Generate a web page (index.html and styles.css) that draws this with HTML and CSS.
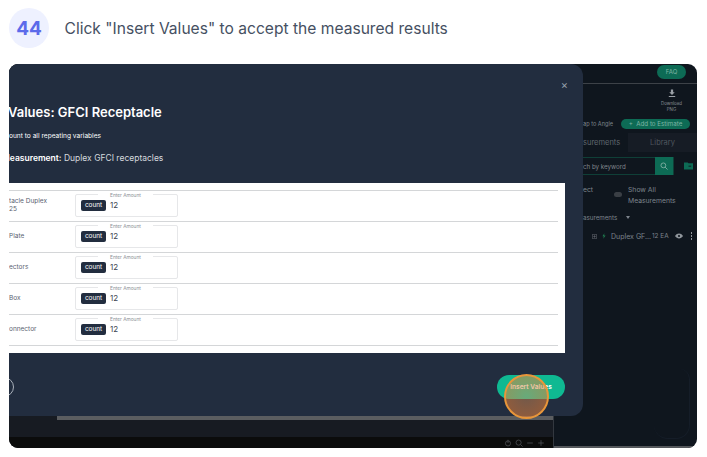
FILE: index.html
```html
<!DOCTYPE html>
<html lang="en">
<head>
    <meta charset="UTF-8">
    <title>Step 44</title>
    <link rel="stylesheet" href="styles.css">
</head>
<body>

<!-- Step heading -->
<div class="step-head">
    <div class="step-num">44</div>
    <div class="step-text">Click "Insert Values" to accept the measured results</div>
</div>

<!-- Screenshot of the app -->
<div class="shot">

    <div class="canvas-col">
        <div class="canvas-area"></div>
        <div class="scroll-row"><div class="scroll-thumb"></div></div>
        <div class="canvas-foot"></div>
        <div class="zoom-bar">
            <svg class="zoom-icon" viewBox="0 0 10 10"><circle cx="5" cy="5.5" r="3.2"/><path d="M5 1v4"/></svg>
            <svg class="zoom-icon" viewBox="0 0 10 10"><circle cx="4.5" cy="4.5" r="3.2"/><path d="M7 7l2.5 2.5"/></svg>
            <svg class="zoom-icon" viewBox="0 0 10 10"><path d="M1.5 5h7"/></svg>
            <svg class="zoom-icon" viewBox="0 0 10 10"><path d="M1.5 5h7M5 1.5v7"/></svg>
        </div>
    </div>

    <div class="side">
        <div class="side-top"><span class="faq">FAQ</span></div>
        <div class="download">
            <svg class="download-icon" viewBox="0 0 10 10"><path d="M3.6 0h2.8v3.4h2L5 6.8 1.6 3.4h2zM1 8.2h8v1.3H1z"/></svg>
            <div>Download<br>PNG</div>
        </div>
        <div class="snap-row">
            <span>ap to Angle</span>
            <span class="add-pill">+&nbsp; Add to Estimate</span>
        </div>
        <div class="tabs">
            <div class="tab-on">surements</div>
            <div class="tab-off">Library</div>
        </div>
        <div class="search-row">
            <div class="search-box">
                <span class="search-text">ch by keyword</span>
                <span class="search-btn">
                    <svg viewBox="0 0 10 10"><circle cx="4.2" cy="4.2" r="3"/><path d="M6.4 6.4l3 3"/></svg>
                </span>
            </div>
            <svg class="folder" viewBox="0 0 10 8"><path d="M0 0h4l1 1h5v7H0z"/><path class="folder-mark" d="M5 4.2h3"/></svg>
        </div>
        <div class="select-row">
            <span>ect</span>
            <span class="toggle"></span>
            <span class="show-all">Show All<br>Measurements</span>
        </div>
        <div class="list-head">asurements<span class="caret"></span></div>
        <div class="item-row">
            <svg class="item-box" viewBox="0 0 8 8"><path d="M.5.5h7v7h-7zM4 2v4M2 4h4"/></svg>
            <svg class="item-bolt" viewBox="0 0 6 8"><path d="M3.6 0L.6 4.5h2L2 8l3.4-4.8H3.2z"/></svg>
            <span class="item-name">Duplex GF...</span>
            <span>12 EA</span>
            <svg class="item-eye" viewBox="0 0 12 8"><path d="M0 4c3-5 9-5 12 0-3 5-9 5-12 0z"/><circle class="eye-dot" cx="6" cy="4" r="1.6"/></svg>
            <span class="kebab"><i></i><i></i><i></i></span>
        </div>
        <div class="side-ghost"></div>
    </div>

    <!-- Modal over the app -->
    <div class="modal">
        <div class="modal-close">&times;</div>
        <div class="modal-title">Values: GFCI Receptacle</div>
        <div class="modal-sub">ount to all repeating variables</div>
        <div class="modal-meas"><b>Measurement:</b> Duplex GFCI receptacles</div>

        <div class="panel">
            <div class="var-row var-first">
                <div class="var-name">tacle Duplex<br>25</div>
                <div class="amount">
                    <span class="amount-label">Enter Amount</span>
                    <span class="unit">count</span>
                    <span class="amount-val">12</span>
                </div>
            </div>
            <div class="var-row">
                <div class="var-name">Plate</div>
                <div class="amount">
                    <span class="amount-label">Enter Amount</span>
                    <span class="unit">count</span>
                    <span class="amount-val">12</span>
                </div>
            </div>
            <div class="var-row">
                <div class="var-name">ectors</div>
                <div class="amount">
                    <span class="amount-label">Enter Amount</span>
                    <span class="unit">count</span>
                    <span class="amount-val">12</span>
                </div>
            </div>
            <div class="var-row">
                <div class="var-name">Box</div>
                <div class="amount">
                    <span class="amount-label">Enter Amount</span>
                    <span class="unit">count</span>
                    <span class="amount-val">12</span>
                </div>
            </div>
            <div class="var-row">
                <div class="var-name">onnector</div>
                <div class="amount">
                    <span class="amount-label">Enter Amount</span>
                    <span class="unit">count</span>
                    <span class="amount-val">12</span>
                </div>
            </div>
        </div>

        <div class="modal-foot">
            <span class="back-btn"></span>
            <span class="insert-btn">Insert Values</span>
        </div>
    </div>

    <!-- Click marker -->
    <div class="click-mark"></div>
</div>

</body>
</html>
```

FILE: styles.css
```css
* {
    box-sizing: border-box;
}

body {
    margin: 0;
    padding: 8px 10px 0 9px;
    background: #ffffff;
    font-family: Inter, "Liberation Sans", sans-serif;
}

/* Step heading */
.step-head {
    display: flex;
    align-items: center;
    gap: 15.5px;
    height: 40px;
}

.step-num {
    width: 40px;
    height: 40px;
    border-radius: 50%;
    background: #eef1ff;
    color: #5c6bea;
    font-size: 19px;
    font-weight: 700;
    display: flex;
    align-items: center;
    justify-content: center;
}

.step-text {
    font-size: 15.6px;
    color: #465062;
}

/* Screenshot */
.shot {
    position: relative;
    display: flex;
    width: 688px;
    height: 384px;
    margin-top: 16px;
    overflow: hidden;
    border-radius: 9px;
    background: #0f161e;
}

.canvas-col {
    display: flex;
    flex-direction: column;
    width: 545px;
    border-right: 1px solid #33383f;
}

.canvas-area {
    height: 352px;
    background: #171b22;
}

.scroll-row {
    height: 4px;
    padding-left: 48px;
    background: #171b22;
}

.scroll-thumb {
    height: 4px;
    background: #5b5d60;
}

.canvas-foot {
    height: 17px;
    background: #171b22;
}

.zoom-bar {
    flex: 1;
    display: flex;
    justify-content: flex-end;
    align-items: center;
    gap: 3px;
    padding-right: 8px;
    background: #0b0c0c;
}

.zoom-icon {
    width: 8px;
    height: 8px;
    fill: none;
    stroke: #4c4f53;
    stroke-width: 1;
}

/* Right side of the app */
.side {
    position: relative;
    flex: 1;
    padding-left: 29px;
    color: #7d848c;
    font-size: 6.5px;
    border-bottom: 2px solid #55585c;
}

.side-top {
    display: flex;
    justify-content: flex-end;
    height: 20px;
    padding: 1px 11px 0 0;
    border-bottom: 1px solid #3d4248;
}

.faq {
    width: 29px;
    height: 14px;
    border-radius: 7px;
    background: #0d6b55;
    color: #7fb5a6;
    font-size: 6px;
    line-height: 14px;
    text-align: center;
}

.download {
    margin-top: 5px;
    padding-left: 63px;
    width: 114px;
    text-align: center;
    font-size: 4.4px;
    line-height: 5.5px;
    color: #8a9097;
    height: 30px;
}

.download-icon {
    display: block;
    width: 8px;
    height: 9px;
    margin: 0 auto 3px;
    fill: #9aa0a6;
}

.snap-row {
    display: flex;
    align-items: center;
    justify-content: space-between;
    height: 10px;
    padding-right: 7px;
    font-size: 5.6px;
}

.add-pill {
    width: 69px;
    height: 10px;
    border-radius: 5px;
    background: #0d6b55;
    color: #7fb5a6;
    font-size: 6.2px;
    line-height: 10px;
    text-align: center;
}

.tabs {
    display: flex;
    height: 19px;
    margin-top: 4px;
    font-size: 7.5px;
    line-height: 19px;
}

.tab-on {
    width: 45px;
    color: #5f666e;
}

.tab-off {
    flex: 1;
    background: #161c25;
    color: #4f565e;
    text-align: center;
}

.search-row {
    display: flex;
    align-items: center;
    gap: 10px;
    margin-top: 5px;
}

.search-box {
    display: flex;
    justify-content: space-between;
    align-items: center;
    width: 91px;
    height: 18px;
    border: 1px solid #0f3f37;
    border-left: 0;
    color: #80868d;
    font-size: 6.2px;
}

.search-btn {
    display: flex;
    align-items: center;
    justify-content: center;
    width: 18px;
    height: 18px;
    background: #0d6b55;
}

.search-btn svg {
    width: 8px;
    height: 8px;
    fill: none;
    stroke: #8fb8ad;
    stroke-width: 1;
}

.folder {
    width: 9px;
    height: 8px;
    fill: #0d6b55;
}

.folder-mark {
    fill: none;
    stroke: #0f161e;
    stroke-width: 1;
}

.select-row {
    display: flex;
    margin-top: 9px;
    height: 24px;
    line-height: 11px;
    font-size: 6.8px;
}

.select-row > span:first-child {
    width: 32px;
}

.toggle {
    width: 8px;
    height: 5px;
    margin: 8px 6px 0 -1px;
    border-radius: 3px;
    background: #3a3f45;
}

.list-head {
    margin-top: 5px;
    font-size: 6.2px;
    line-height: 9px;
}

.caret {
    display: inline-block;
    margin-left: 9px;
    border: 2px solid transparent;
    border-top: 3px solid #7d848c;
    border-bottom: 0;
    vertical-align: 1px;
}

.item-row {
    display: flex;
    align-items: center;
    height: 10px;
    margin-top: 9px;
    padding-left: 9px;
    font-size: 6.4px;
}

.item-box {
    width: 5px;
    height: 5px;
    fill: none;
    stroke: #666c73;
    stroke-width: 1;
}

.item-bolt {
    width: 4px;
    height: 6px;
    margin: 0 5px 0 5px;
    fill: #1f7a4f;
}

.item-name {
    width: 41px;
    font-size: 7px;
    white-space: nowrap;
}

.item-eye {
    width: 8px;
    height: 6px;
    margin-left: 6px;
    fill: #8f959b;
}

.eye-dot {
    fill: #0f161e;
}

.kebab {
    display: flex;
    flex-direction: column;
    gap: 1.5px;
    margin-left: 8px;
}

.kebab i {
    display: block;
    width: 1.5px;
    height: 1.5px;
    background: #8f959b;
}

.side-ghost {
    position: absolute;
    right: 7px;
    bottom: 7px;
    width: 36px;
    height: 70px;
    border: 1px solid #151d28;
    border-top: 0;
    border-left: 0;
    border-radius: 0 10px 14px 14px;
}

/* Modal */
.modal {
    position: absolute;
    left: 0;
    top: 0;
    width: 574px;
    height: 352px;
    padding-top: 40px;
    overflow: hidden;
    border-radius: 0 12px 12px 0;
    background: #222d3f;
    color: #ffffff;
}

.modal-close {
    position: absolute;
    right: 15px;
    top: 14px;
    color: #97a0ab;
    font-size: 11px;
    line-height: 15px;
}

.modal-title {
    margin-left: -1px;
    font-size: 13px;
    font-weight: 600;
    line-height: 17px;
}

.modal-sub {
    margin-top: 11px;
    font-size: 6.6px;
    line-height: 8px;
}

.modal-meas {
    margin-top: 12px;
    margin-left: -7px;
    font-size: 8.5px;
    line-height: 12px;
    color: #d5d9de;
}

.modal-meas b {
    color: #ffffff;
    font-weight: 600;
}

.panel {
    width: 556px;
    height: 170px;
    margin-top: 19px;
    padding: 7px 7px 0 0;
    background: #ffffff;
}

.var-row {
    display: flex;
    align-items: center;
    height: 31px;
    padding-bottom: 2px;
    border-bottom: 1px solid #d4d6d8;
}

.var-first {
    height: 32px;
    border-top: 1px solid #d4d6d8;
}

.var-name {
    width: 66px;
    color: #5a6270;
    font-size: 6.5px;
    line-height: 8px;
}

.amount {
    position: relative;
    display: flex;
    align-items: center;
    gap: 4px;
    width: 103px;
    height: 23px;
    padding-left: 5px;
    border: 1px solid #e6e7e9;
    border-radius: 2px;
}

.amount-label {
    position: absolute;
    left: 22px;
    top: -3px;
    padding: 0 12px 0 12px;
    background: #ffffff;
    color: #8b8f95;
    font-size: 4.8px;
    line-height: 6px;
}

.unit {
    width: 25px;
    height: 11px;
    border-radius: 2px;
    background: #222d3f;
    color: #ffffff;
    font-size: 6.4px;
    line-height: 11px;
    text-align: center;
}

.amount-val {
    color: #3c4350;
    font-size: 8px;
}

.modal-foot {
    display: flex;
    justify-content: space-between;
    align-items: center;
    width: 556px;
    margin-top: 22px;
}

.back-btn {
    width: 20px;
    height: 20px;
    margin-left: -15px;
    border: 1px solid #aab1bb;
    border-radius: 50%;
}

.insert-btn {
    width: 68px;
    height: 24px;
    border-radius: 12px;
    background: #0fb992;
    color: #ffffff;
    font-size: 6.6px;
    font-weight: 600;
    line-height: 24px;
    text-align: center;
}

.click-mark {
    position: absolute;
    left: 495px;
    top: 310px;
    width: 45px;
    height: 45px;
    border: 2px solid #e8963a;
    border-radius: 50%;
    background: radial-gradient(circle, rgba(225, 150, 90, 0.42) 0, rgba(232, 130, 60, 0.55) 70%);
}
```
